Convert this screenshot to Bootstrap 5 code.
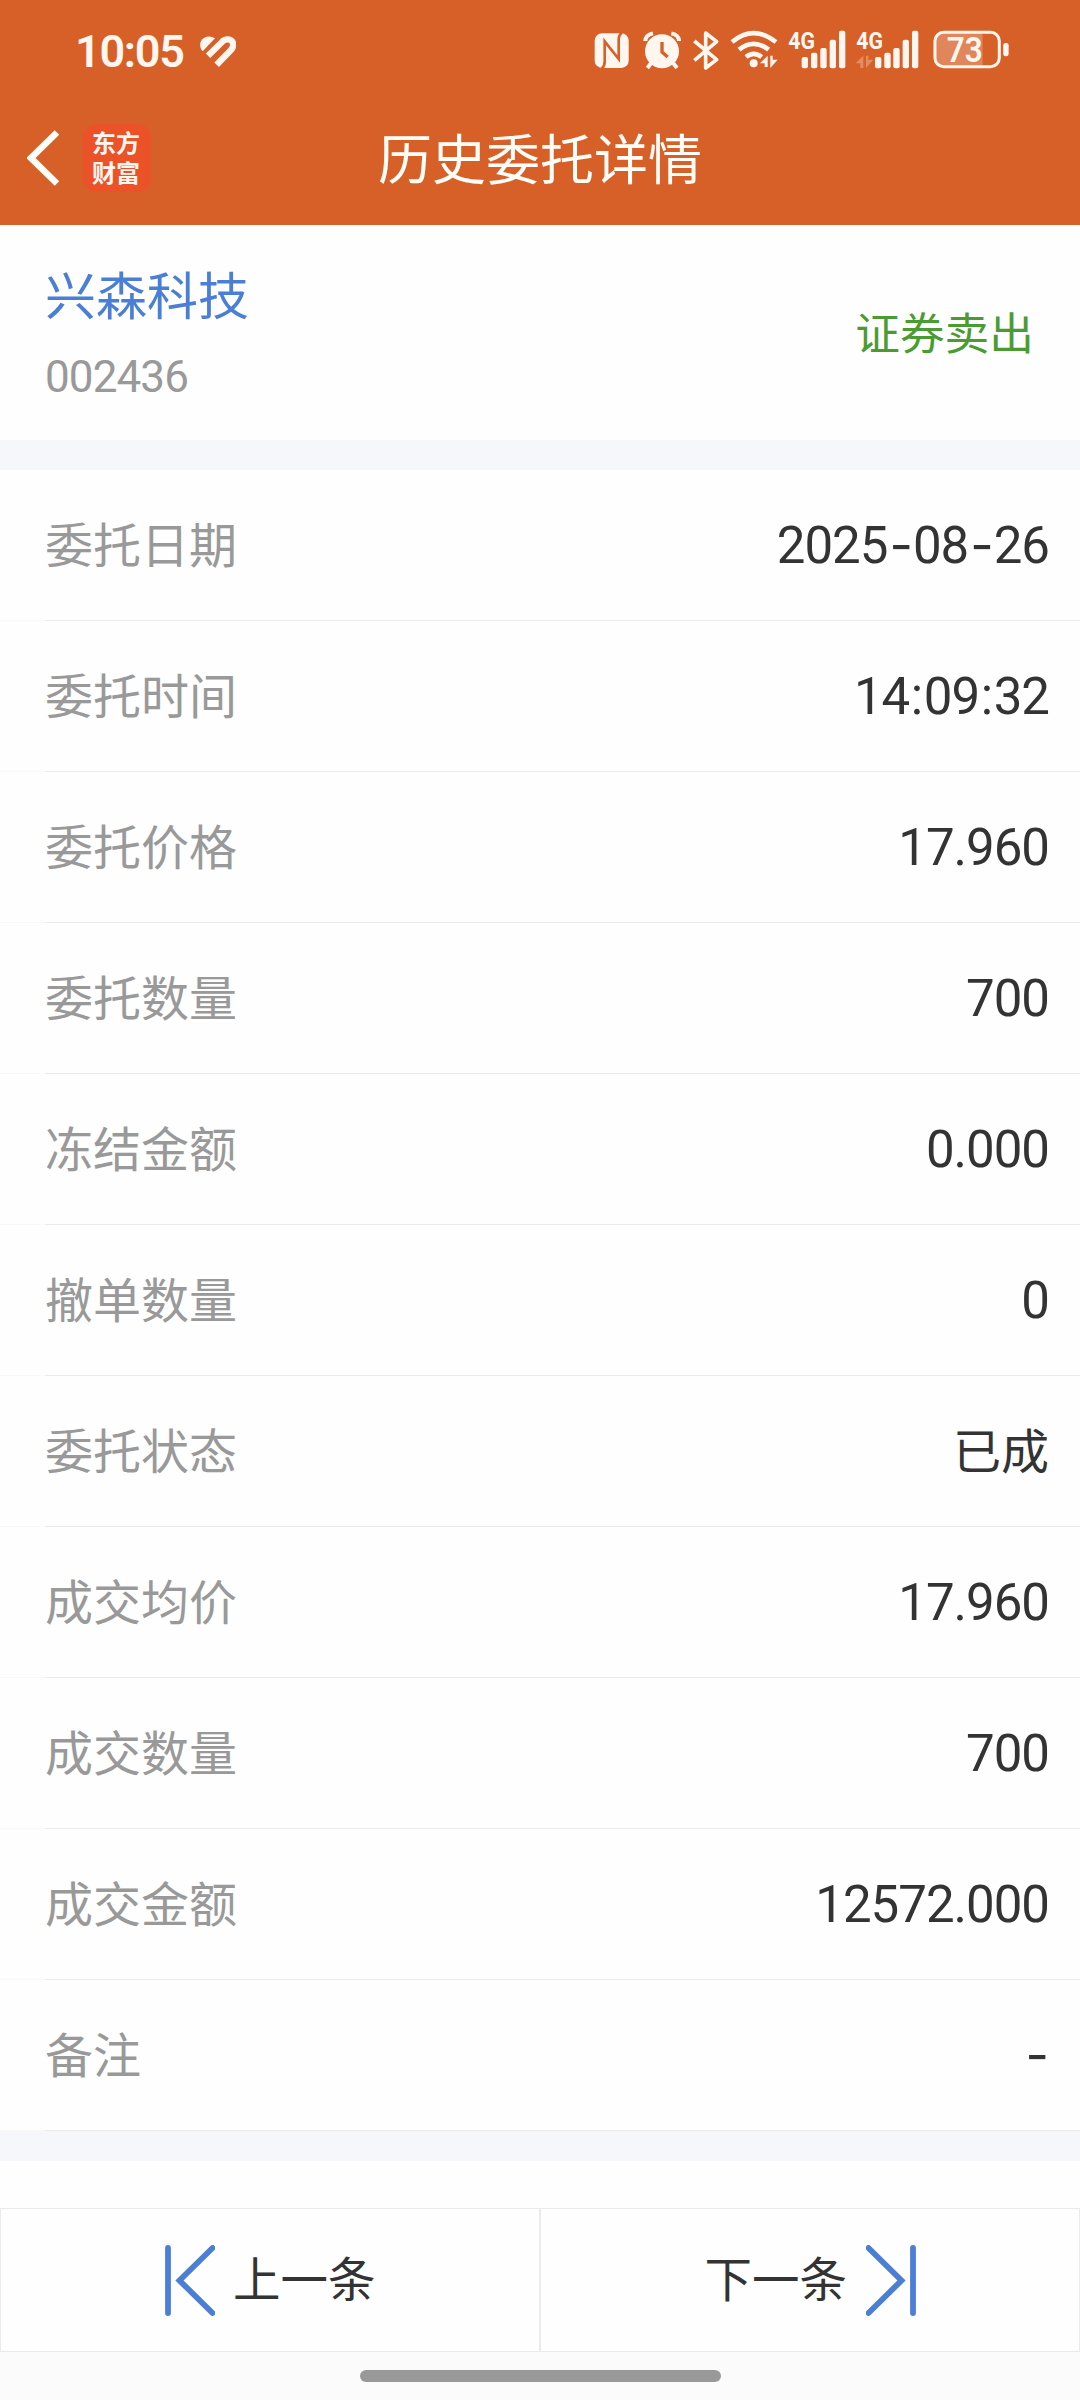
<!DOCTYPE html>
<html lang="zh-CN">
<head>
<meta charset="utf-8">
<meta name="viewport" content="width=device-width, initial-scale=1">
<title>历史委托详情</title>
<link href="https://cdn.jsdelivr.net/npm/bootstrap@5.3.0/dist/css/bootstrap.min.css" rel="stylesheet">
<style>
body{font-family:Roboto,"Noto Sans CJK SC",sans-serif;background:#fefefe;color:#333;line-height:1}
svg{display:block;flex:none}
.screen{height:2400px;overflow:hidden}
.top-area{background:#d75f28;height:225px;color:#fff7ef}
.status-row{height:100px;padding:0 70px 0 75px}
.clock-text{font-weight:600;font-size:45px;letter-spacing:-1.3px;padding-top:3px}
.heart{margin:2px 0 0 16px}
.title-row{height:125px;padding:0 27px 0 27px}
.title-side{width:300px;height:115px}
.title-text{font-size:54px;color:#fffdf8;font-weight:400;line-height:1;height:115px;padding-top:8px}
.logo-tile{width:68px;height:68px;border-radius:14px;background:#eb5228;margin-left:24px;padding:5px 0 0 9px;font-size:24px;font-weight:700;line-height:30px;color:#fff7ef}
.stock-panel{height:215px;padding:0 46px 0 45px}
.stock-info{padding-top:47px}
.stock-name{font-size:51px;color:#4a7fd5}
.stock-code{font-size:44px;color:#999;letter-spacing:-.9px;margin-top:32px}
.side-text{font-size:44.7px;color:#4a9c32;padding-top:5px}
.band{height:30px;background:#f6f7fa}
.detail-row{height:151px;padding:0 31px 0 45px;background:linear-gradient(#ebebed,#ebebed) 45px 100%/100% 1px no-repeat,linear-gradient(#f8f8f8,#f8f8f8) 0 100%/45px 1px no-repeat}
.row-label{font-size:48px;color:#999;padding-top:2px}
.row-value{font-size:51px;color:#333;letter-spacing:-1px}
.row-value i{font-style:normal;padding:0 1.6px}
.row-value b{font-weight:400;font-family:Inter,sans-serif;line-height:0;padding:0 1px 0 2px}
.row-value.han{font-size:48px;letter-spacing:0;padding-top:2px}
.pager{height:144px;margin-top:47px}
.pager-btn{border:1px solid #ebebeb;font-size:47.5px;color:#333;gap:18.5px;width:50%}
.pager-btn span{padding-top:4px}
.home-zone{height:48px;background:#fbfbfb;padding-top:18px}
.home-bar{width:361px;height:12px;background:#999}
</style>
<script src="https://cdn.jsdelivr.net/npm/bootstrap@5.3.0/dist/js/bootstrap.bundle.min.js"></script>
</head>
<body>
<div class="screen d-flex flex-column">
<header class="top-area">
  <div class="status-row d-flex align-items-center">
    <div class="clock-text">10:05</div>
    <svg class="heart" width="36" height="31" viewBox="600 106 108 93"><path d="M608 152C596 138 599 120 612 112Q628 103 645 113Z" fill="#fff7ef"/><path d="M624 165L664 126C674 114 690 113 697 123C703 133 698 143 690 151L650 192" fill="none" stroke="#fff7ef" stroke-width="19"/></svg>
    <svg class="ms-auto" width="416.67" height="61.67" viewBox="40 30 1250 185" fill="#fff7ef">
      <rect x="45" y="73" width="102" height="104" rx="22"/>
      <path d="M66 179Q75 172 75 158V97L117 150V92Q117 78 127 71" fill="none" stroke="#d75f28" stroke-width="8"/>
      <circle cx="247" cy="127" r="51"/>
      <path d="M197 96Q197 78 220 73M298 96Q298 78 275 73" fill="none" stroke="#fff7ef" stroke-width="12"/>
      <path d="M214 163L203 177M281 163L292 177" stroke="#fff7ef" stroke-width="12"/>
      <path d="M247 99V129L264 144" fill="none" stroke="#d75f28" stroke-width="10"/>
      <path d="M344 96L411 152L378 177V72L411 98L344 154" fill="none" stroke="#fff7ef" stroke-width="11" stroke-linejoin="round"/>
      <g fill="none" stroke="#fff7ef" stroke-width="14"><path d="M457 99Q522 46 589 99"/><path d="M478 122Q522 87 567 122"/><path d="M499 144Q522 125 546 144"/></g>
      <circle cx="522" cy="163" r="12"/>
      <path d="M564 140V174H555V163H541ZM572 140L579 140V152H594L572 177Z"/>
      <g font-family="Roboto, sans-serif" font-weight="700" font-size="73">
        <text x="626" y="120" textLength="80" lengthAdjust="spacingAndGlyphs">4G</text>
        <text x="830" y="120" textLength="80" lengthAdjust="spacingAndGlyphs">4G</text>
      </g>
      <g><rect x="666" y="144" width="19" height="34" rx="6"/><rect x="694" y="131" width="19" height="47" rx="6"/><rect x="722" y="117" width="19" height="61" rx="6"/><rect x="750" y="92" width="19" height="86" rx="6"/><rect x="778" y="65" width="19" height="113" rx="6"/></g>
      <g><rect x="886" y="144" width="19" height="34" rx="6"/><rect x="914" y="131" width="19" height="47" rx="6"/><rect x="941" y="117" width="19" height="61" rx="6"/><rect x="969" y="92" width="19" height="86" rx="6"/><rect x="997" y="65" width="19" height="113" rx="6"/></g>
      <path opacity=".3" d="M851 140V177H842V163H828ZM859 140H866V152H881L859 177Z"/>
      <path opacity=".25" d="M1209 72H1092Q1068 74 1068 98V146Q1068 170 1092 172H1209Z"/>
      <rect x="1066" y="70" width="193" height="103" rx="26" fill="none" stroke="#fff7ef" stroke-width="9"/>
      <rect x="1271" y="102" width="16" height="40" rx="7"/>
      <text x="1101" y="159" font-family="Roboto, sans-serif" font-weight="600" font-size="104" textLength="108" lengthAdjust="spacingAndGlyphs">73</text>
    </svg>
  </div>
  <div class="title-row d-flex justify-content-between">
    <div class="title-side d-flex align-items-center">
      <svg width="32" height="56" viewBox="0 0 32 56"><path d="M30 2.500L4 28L30 53.500" fill="none" stroke="#fffdf8" stroke-width="6.500"/></svg>
      <div class="logo-tile">东方<br>财富</div>
    </div>
    <h1 class="title-text mb-0 d-flex align-items-center">历史委托详情</h1>
    <div class="title-side"></div>
  </div>
</header>
<section class="stock-panel d-flex justify-content-between">
  <div class="stock-info"><div class="stock-name">兴森科技</div><div class="stock-code">002436</div></div>
  <div class="side-text align-self-center">证券卖出</div>
</section>
<div class="band"></div>
<main>
  <div class="detail-row d-flex align-items-center justify-content-between"><span class="row-label">委托日期</span><span class="row-value">2025<b>-</b>08<b>-</b>26</span></div>
  <div class="detail-row d-flex align-items-center justify-content-between"><span class="row-label">委托时间</span><span class="row-value">14<i>:</i>09<i>:</i>32</span></div>
  <div class="detail-row d-flex align-items-center justify-content-between"><span class="row-label">委托价格</span><span class="row-value">17.960</span></div>
  <div class="detail-row d-flex align-items-center justify-content-between"><span class="row-label">委托数量</span><span class="row-value">700</span></div>
  <div class="detail-row d-flex align-items-center justify-content-between"><span class="row-label">冻结金额</span><span class="row-value">0.000</span></div>
  <div class="detail-row d-flex align-items-center justify-content-between"><span class="row-label">撤单数量</span><span class="row-value">0</span></div>
  <div class="detail-row d-flex align-items-center justify-content-between"><span class="row-label">委托状态</span><span class="row-value han">已成</span></div>
  <div class="detail-row d-flex align-items-center justify-content-between"><span class="row-label">成交均价</span><span class="row-value">17.960</span></div>
  <div class="detail-row d-flex align-items-center justify-content-between"><span class="row-label">成交数量</span><span class="row-value">700</span></div>
  <div class="detail-row d-flex align-items-center justify-content-between"><span class="row-label">成交金额</span><span class="row-value">12572.000</span></div>
  <div class="detail-row d-flex align-items-center justify-content-between"><span class="row-label">备注</span><span class="row-value"><b>-</b></span></div>
</main>
<div class="band"></div>
<nav class="pager d-flex">
  <div class="pager-btn d-flex align-items-center justify-content-center">
    <svg width="50" height="71" viewBox="0 0 50 71"><path d="M3 3V68M47.500 3L14.500 35.500L47.500 68" fill="none" stroke="#4a7fd5" stroke-width="5.800" stroke-linecap="round"/></svg>
    <span>上一条</span>
  </div>
  <div class="pager-btn d-flex align-items-center justify-content-center">
    <span>下一条</span>
    <svg width="50" height="71" viewBox="0 0 50 71"><path d="M47 3V68M2.500 3L35.500 35.500L2.500 68" fill="none" stroke="#4a7fd5" stroke-width="5.800" stroke-linecap="round"/></svg>
  </div>
</nav>
<footer class="home-zone"><div class="home-bar rounded-pill mx-auto"></div></footer>
</div>
</body>
</html>
